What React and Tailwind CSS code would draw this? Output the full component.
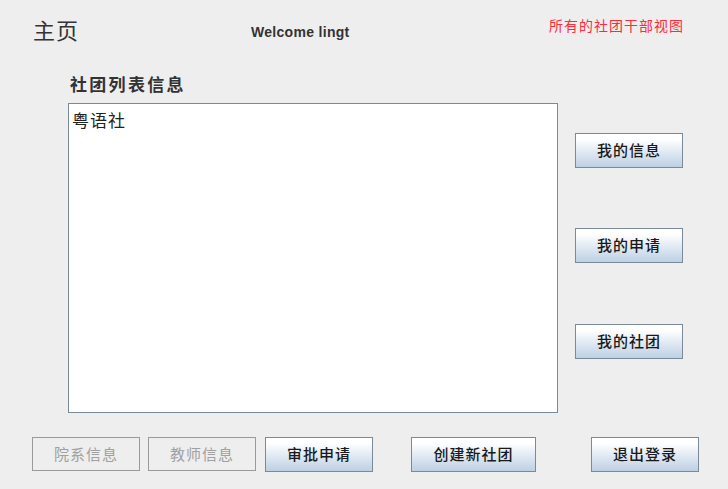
const cjk = { fontFamily: '"Noto Sans CJK SC", "Noto Sans", sans-serif' };

function SwingButton({ label, width = "w-[108px]", disabled = false }) {
    if (disabled) {
        return (
            <button
                style={cjk}
                className={`${width} h-[34px] border border-[#9a9a9a] bg-[#eeeeee] text-[15px] tracking-[1px] text-[#a0a0a0] flex items-center justify-center`}
            >
                {label}
            </button>
        );
    }
    return (
        <button
            style={cjk}
            className={`${width} h-[35px] border border-[#7a8a99] bg-gradient-to-b from-[#ffffff] from-15% to-[#bdd0e4] text-[15px] font-medium tracking-[1px] text-[#1a1a1a] flex items-center justify-center`}
        >
            {label}
        </button>
    );
}

export default function App() {
    return (
        <div className="w-[728px] h-[489px] bg-[#eeeeee] overflow-hidden flex flex-col">
            {/* header */}
            <div className="flex items-start pt-[14px] h-[70px]">
                <div style={cjk} className="ml-[33px] w-[218px] text-[22px] leading-[30px] tracking-[1px] text-[#333333]">
                    主页
                </div>
                <div
                    style={{ fontFamily: '"Liberation Sans", Arial, sans-serif' }}
                    className="w-[298px] mt-[9px] text-[14px] font-bold leading-[18px] tracking-[0.3px] text-[#333333]"
                >
                    Welcome lingt
                </div>
                <div style={cjk} className="mt-[1px] text-[14px] leading-[20px] tracking-[1px] text-[#ff2a3a]">
                    所有的社团干部视图
                </div>
            </div>

            {/* main */}
            <div className="flex">
                <div className="ml-[68px] flex flex-col">
                    <div style={cjk} className="ml-[2px] h-[33px] text-[17px] font-bold leading-[28px] tracking-[2.3px] text-[#333333]">
                        社团列表信息
                    </div>
                    <div className="w-[490px] h-[310px] border border-[#7a8a99] bg-white px-[3px] pt-[4px]">
                        <div style={cjk} className="text-[17px] leading-[24px] tracking-[1px] text-[#222222]">
                            粤语社
                        </div>
                    </div>
                </div>
                <div className="ml-[17px] pt-[63px] flex flex-col">
                    <SwingButton label="我的信息" />
                    <div className="mt-[60px]">
                        <SwingButton label="我的申请" />
                    </div>
                    <div className="mt-[61px]">
                        <SwingButton label="我的社团" />
                    </div>
                </div>
            </div>

            {/* bottom buttons */}
            <div className="flex items-start mt-[24px] ml-[32px]">
                <SwingButton label="院系信息" disabled />
                <div className="ml-[8px]">
                    <SwingButton label="教师信息" disabled />
                </div>
                <div className="ml-[9px]">
                    <SwingButton label="审批申请" />
                </div>
                <div className="ml-[38px]">
                    <SwingButton label="创建新社团" width="w-[125px]" />
                </div>
                <div className="ml-[55px]">
                    <SwingButton label="退出登录" />
                </div>
            </div>
        </div>
    );
}
